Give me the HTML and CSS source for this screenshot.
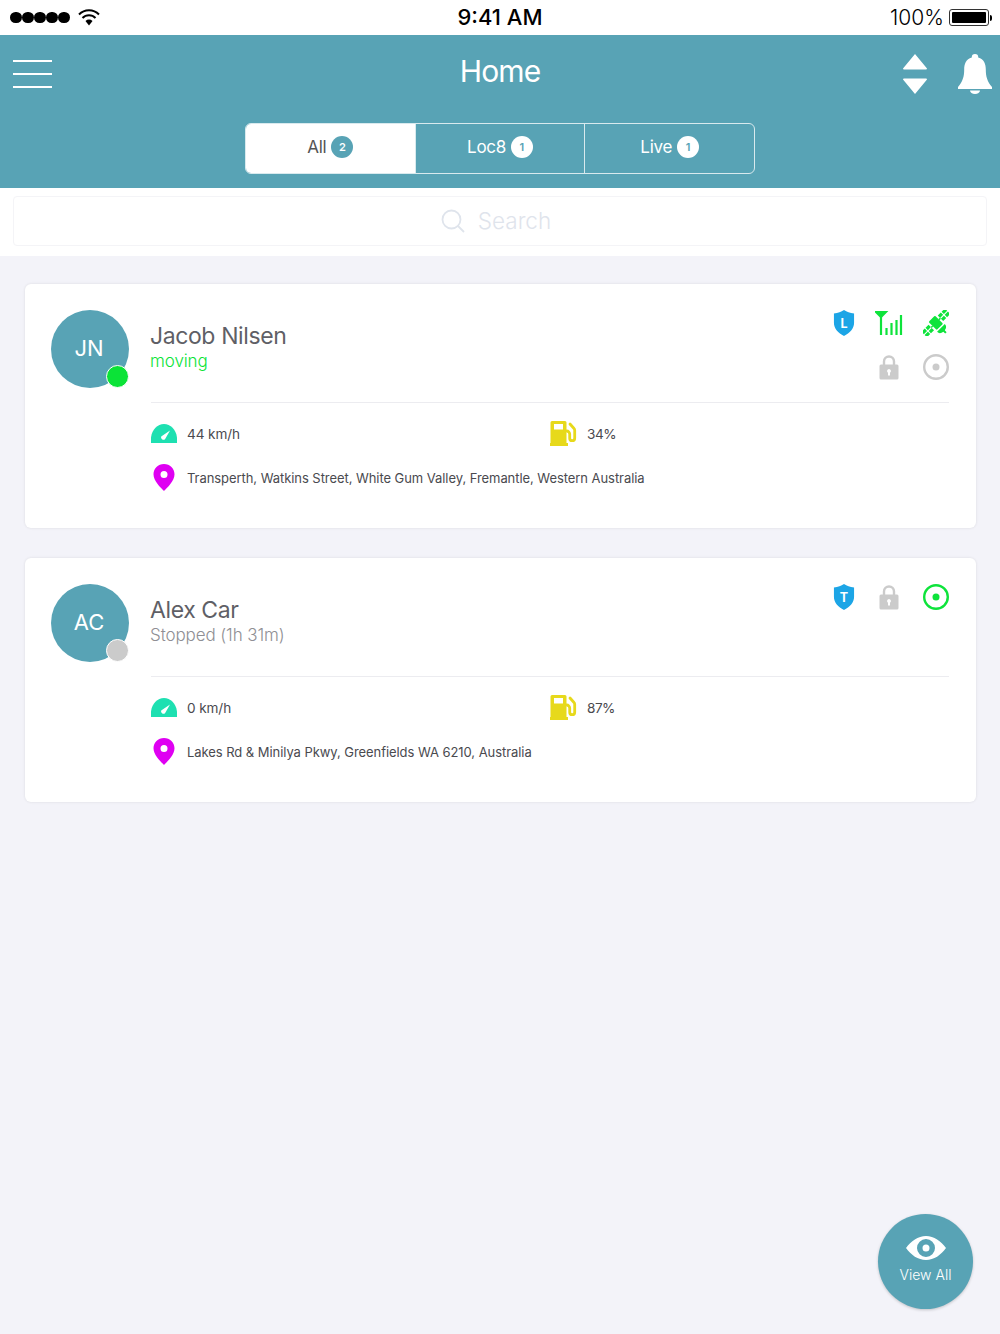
FILE: index.html
```html
<!DOCTYPE html>
<html lang="en">
<head>
    <meta charset="UTF-8">
    <meta name="viewport" content="width=device-width, initial-scale=1.0">
    <title>Home</title>
    <link rel="stylesheet" href="styles.css">
</head>
<body>
    <!-- Shared icons -->
    <svg class="icon-defs" xmlns="http://www.w3.org/2000/svg">
        <symbol id="icon-lock" viewBox="0 0 26 26">
            <path d="M8 11V7.500a5 5 0 0 1 10 0V11" fill="none" stroke="#cbcbcb" stroke-width="2.400"/>
            <path fill-rule="evenodd" fill="#cbcbcb" d="M5 10.500h16a1.500 1.500 0 0 1 1.500 1.500v12a1.500 1.500 0 0 1-1.500 1.500H5a1.500 1.500 0 0 1-1.500-1.500V12A1.500 1.500 0 0 1 5 10.500zM13 15a2 2 0 0 0-1 3.700V21.500h2v-2.800A2 2 0 0 0 13 15z"/>
        </symbol>
        <symbol id="icon-gauge" viewBox="0 0 26 19">
            <path fill="#1ee0b1" d="M0 19v-5.500C1 5.500 6.500 0 13 0s12 5.500 13 13.500V19z"/>
            <path fill="#fff" d="M19 6.500l-5 8.700a2.400 2.400 0 0 1-3.800-2.700z"/>
        </symbol>
        <symbol id="icon-fuel" viewBox="0 0 27 25">
            <path fill-rule="evenodd" fill="#e7d91b" d="M2 0h13a1.500 1.500 0 0 1 1.500 1.500V22H18v3H0v-3h.5V1.500A1.500 1.500 0 0 1 2 0zM4 3v5.500h9V3z"/>
            <path fill="none" stroke="#e7d91b" stroke-width="2.800" stroke-linecap="round" stroke-linejoin="round" d="M20 3l4 4.500a2.500 2.500 0 0 1 .7 1.700v8a2.500 2.500 0 0 1-5 0V13a3 3 0 0 0-3-3"/>
        </symbol>
        <symbol id="icon-pin" viewBox="0 0 22 27">
            <path fill-rule="evenodd" fill="#df00f2" d="M11 0C5 0 .5 4.500.5 10.300.5 17 7.500 23.500 11 27c3.500-3.500 10.500-10 10.500-16.700C21.500 4.500 17 0 11 0zm0 7a3.500 3.500 0 1 1 0 7 3.500 3.500 0 0 1 0-7z"/>
        </symbol>
        <symbol id="icon-shield" viewBox="0 0 22 27">
            <path fill="#1ca5e6" d="M11 0c3 2 6 3.200 10.500 3.700V13c0 6.500-4.500 11-10.500 14C5 24 .5 19.500.5 13V3.700C5 3.200 8 2 11 0z"/>
        </symbol>
    </svg>

    <!-- Status bar -->
    <div class="status-bar">
        <div class="status-left">
            <div class="signal-dots"><span></span><span></span><span></span><span></span><span></span></div>
            <svg class="wifi" width="22" height="17" viewBox="0 0 22 17">
                <path d="M1 5.500a14 14 0 0 1 20 0M4.500 9a9 9 0 0 1 13 0" fill="none" stroke="#000" stroke-width="2"/>
                <path d="M7.500 12a5 5 0 0 1 7 0L11 16.500z" fill="#000"/>
            </svg>
        </div>
        <div class="status-time">9:41 AM</div>
        <div class="status-right">
            <span>100%</span>
            <div class="battery"><div class="battery-fill"></div></div>
            <div class="battery-tip"></div>
        </div>
    </div>

    <!-- Header -->
    <div class="header">
        <div class="header-top">
            <div class="menu-button"><span></span><span></span><span></span></div>
            <h1>Home</h1>
            <div class="header-actions">
                <svg width="24" height="40" viewBox="0 0 24 40">
                    <path fill="#fff" d="M12 0l12 14.500a1 1 0 0 1-1 1H1a1 1 0 0 1-1-1zM12 40L0 25.500a1 1 0 0 1 1-1h22a1 1 0 0 1 1 1z"/>
                </svg>
                <svg width="34" height="40" viewBox="0 0 34 40">
                    <path fill="#fff" d="M17 0a3.200 3.200 0 0 1 3.200 3.400C26 5 27.800 10 27.800 15.500c0 7 1.500 12 6.200 17.500v2H0v-2c4.700-5.500 6.200-10.500 6.200-17.500C6.200 10 8 5 13.800 3.400A3.200 3.200 0 0 1 17 0z"/>
                    <path fill="#fff" d="M12 36.500h10a5 3.500 0 0 1-10 0z"/>
                </svg>
            </div>
        </div>
        <div class="tabs">
            <div class="tab active">All <span class="count">2</span></div>
            <div class="tab">Loc8 <span class="count">1</span></div>
            <div class="tab">Live <span class="count">1</span></div>
        </div>
    </div>

    <!-- Search -->
    <div class="search-section">
        <div class="search-box">
            <svg width="24" height="24" viewBox="0 0 24 24">
                <circle cx="10.500" cy="10.500" r="9" fill="none" stroke="#dfe4ec" stroke-width="1.800"/>
                <path d="M17 17l6 6" stroke="#dfe4ec" stroke-width="1.800"/>
            </svg>
            <span class="search-text">Search</span>
        </div>
    </div>

    <!-- Vehicles -->
    <div class="card-list">
        <div class="card">
            <div class="card-head">
                <div class="avatar">JN<span class="presence moving"></span></div>
                <div class="vehicle-name">
                    <h2>Jacob Nilsen</h2>
                    <p class="moving-text">moving</p>
                </div>
                <div class="state-icons">
                    <svg class="shield" viewBox="0 0 22 27"><use href="#icon-shield"/><text x="11" y="18.500" text-anchor="middle">L</text></svg>
                    <svg class="signal" width="28" height="26" viewBox="0 0 28 26">
                        <path d="M1 2h10L6 7z" fill="#0ee33b" stroke="#0ee33b" stroke-width="2"/>
                        <path d="M6 6v19" stroke="#0ee33b" stroke-width="2.200"/>
                        <path d="M11.500 25v-7M16.500 25V13M21.500 25V10M26 25V5" stroke="#0ee33b" stroke-width="2.200"/>
                    </svg>
                    <svg class="satellite" width="26" height="26" viewBox="0 0 26 26">
                        <g transform="rotate(-45 13 13)" fill="#0ee33b">
                            <rect x="8.500" y="7" width="9" height="11.500" rx="1"/>
                            <path d="M-3.500 9h4.600v3.300h-4.600zM2.200 9h4.300v3.300H2.200zM-3.500 13.400h4.600v3.300h-4.600zM2.200 13.400h4.300v3.300H2.200zM19.500 9h4.300v3.300h-4.300zM24.900 9h4.600v3.300h-4.600zM19.500 13.400h4.300v3.300h-4.300zM24.900 13.400h4.600v3.300h-4.600z"/>
                            <path d="M7.500 20h11a5.500 4.500 0 0 1-4.500 4.400V27h-2v-2.600A5.500 4.500 0 0 1 7.500 20z"/>
                            <path d="M6.500 12h2v1.500h-2zM17.500 12h2v1.500h-2z"/>
                        </g>
                    </svg>
                    <span></span>
                    <svg class="lock"><use href="#icon-lock"/></svg>
                    <svg class="target" width="26" height="26" viewBox="0 0 26 26">
                        <circle cx="13" cy="13" r="11.800" fill="none" stroke="#cbcbcb" stroke-width="2.400"/>
                        <circle cx="13" cy="13" r="3.500" fill="#cbcbcb"/>
                    </svg>
                </div>
            </div>
            <div class="card-body">
                <div class="stat-row">
                    <div class="stat"><svg class="gauge"><use href="#icon-gauge"/></svg>44 km/h</div>
                    <div class="stat fuel"><svg class="fuel-icon"><use href="#icon-fuel"/></svg>34%</div>
                </div>
                <div class="stat address"><svg class="pin"><use href="#icon-pin"/></svg>Transperth, Watkins Street, White Gum Valley, Fremantle, Western Australia</div>
            </div>
        </div>

        <div class="card">
            <div class="card-head">
                <div class="avatar">AC<span class="presence stopped"></span></div>
                <div class="vehicle-name">
                    <h2>Alex Car</h2>
                    <p class="stopped-text">Stopped (1h 31m)</p>
                </div>
                <div class="state-icons">
                    <svg class="shield" viewBox="0 0 22 27"><use href="#icon-shield"/><text x="11" y="18.500" text-anchor="middle">T</text></svg>
                    <svg class="lock"><use href="#icon-lock"/></svg>
                    <svg class="target" width="26" height="26" viewBox="0 0 26 26">
                        <circle cx="13" cy="13" r="11.800" fill="none" stroke="#0ee33b" stroke-width="2.400"/>
                        <circle cx="13" cy="13" r="3.500" fill="#0ee33b"/>
                    </svg>
                </div>
            </div>
            <div class="card-body">
                <div class="stat-row">
                    <div class="stat"><svg class="gauge"><use href="#icon-gauge"/></svg>0 km/h</div>
                    <div class="stat fuel"><svg class="fuel-icon"><use href="#icon-fuel"/></svg>87%</div>
                </div>
                <div class="stat address"><svg class="pin"><use href="#icon-pin"/></svg>Lakes Rd &amp; Minilya Pkwy, Greenfields WA 6210, Australia</div>
            </div>
        </div>
    </div>

    <!-- Floating button -->
    <div class="view-all">
        <svg width="40" height="24" viewBox="0 0 40 24">
            <path fill-rule="evenodd" fill="#fff" d="M20 0c8 0 15 5 20 12-5 7-12 12-20 12S5 19 0 12C5 5 12 0 20 0zm0 3a9 9 0 1 0 0 18 9 9 0 0 0 0-18zm0 5.500a3.500 3.500 0 1 1 0 7 3.500 3.500 0 0 1 0-7z"/>
        </svg>
        <span>View All</span>
    </div>
</body>
</html>
```

FILE: styles.css
```css
* {
    box-sizing: border-box;
}
body {
    position: relative;
    height: 1334px;
    margin: 0;
    overflow: hidden;
    font-family: Inter, "Noto Sans", sans-serif;
    background-color: #f3f3f9;
}
.icon-defs {
    display: none;
}

/* Status bar */
.status-bar {
    display: grid;
    grid-template-columns: 1fr auto 1fr;
    align-items: center;
    height: 35px;
    padding: 0 8px 0 10px;
    background-color: #fff;
    color: #000;
}
.status-left {
    display: flex;
    align-items: center;
    gap: 8px;
}
.signal-dots {
    display: flex;
    gap: 0.500px;
}
.signal-dots span {
    width: 11.500px;
    height: 11.500px;
    border-radius: 50%;
    background-color: #000;
}
.status-time {
    margin: 0 0 2px -2px;
    font-size: 22px;
    font-weight: 500;
}
.status-right {
    display: flex;
    align-items: center;
    justify-content: flex-end;
    font-size: 21px;
    font-weight: 300;
}
.battery {
    width: 40px;
    height: 17px;
    margin-left: 5px;
    padding: 2px;
    border: 1px solid #333;
    border-radius: 3px;
}
.battery-fill {
    height: 100%;
    border-radius: 1px;
    background-color: #000;
}
.battery-tip {
    width: 2px;
    height: 6px;
    margin-left: 1px;
    border-radius: 0 2px 2px 0;
    background-color: #000;
}

/* Header */
.header {
    height: 153px;
    padding: 13px 13px 0;
    background-color: #58a3b5;
    color: #fff;
}
.header-top {
    display: grid;
    grid-template-columns: 1fr auto 1fr;
    align-items: center;
    height: 48px;
}
.header-top h1 {
    margin: 0 0 2px;
    font-size: 30px;
    font-weight: 400;
    letter-spacing: -0.900px;
}
.menu-button {
    display: flex;
    flex-direction: column;
    gap: 10.500px;
    width: 39px;
    margin-top: 4px;
}
.menu-button span {
    height: 2.500px;
    background-color: #fff;
}
.header-actions {
    display: flex;
    justify-content: flex-end;
    align-items: center;
    gap: 31px;
    margin: 4px -5px 0 0;
}
.tabs {
    display: flex;
    width: 510px;
    height: 51px;
    margin: 27px 0 0 232px;
    border: 1px solid #d9eaee;
    border-radius: 6px;
    overflow: hidden;
}
.tab {
    display: flex;
    flex: 1;
    justify-content: center;
    align-items: center;
    gap: 5px;
    padding-bottom: 3px;
    border-left: 1px solid #d9eaee;
    font-size: 17px;
    letter-spacing: -0.300px;
}
.tab:first-child {
    border-left: none;
}
.tab.active {
    background-color: #fff;
    color: #555;
}
.count {
    display: flex;
    justify-content: center;
    align-items: center;
    width: 22px;
    height: 22px;
    border-radius: 50%;
    background-color: #fff;
    color: #58a3b5;
    font-size: 11px;
    font-weight: 600;
    letter-spacing: 0;
}
.tab.active .count {
    background-color: #58a3b5;
    color: #fff;
}

/* Search */
.search-section {
    padding: 8px 13px 10px;
    background-color: #fff;
}
.search-box {
    display: flex;
    justify-content: center;
    align-items: center;
    gap: 13px;
    height: 50px;
    padding-right: 8px;
    border: 1px solid #f4f4f7;
    border-radius: 4px;
    color: #dfe4ec;
    font-size: 22.500px;
    font-weight: 300;
}
.search-text {
    margin-bottom: 2px;
}

/* Cards */
.card-list {
    display: flex;
    flex-direction: column;
    gap: 30px;
    padding: 28px 24px 0 25px;
}
.card {
    height: 244px;
    padding: 26px 27px 0 26px;
    border-radius: 6px;
    background-color: #fff;
    box-shadow: 0 0 3px rgba(0, 0, 0, 0.1);
}
.card-head {
    display: flex;
    height: 92px;
}
.avatar {
    position: relative;
    display: flex;
    flex-shrink: 0;
    justify-content: center;
    align-items: center;
    width: 78px;
    height: 78px;
    padding: 0 2px 2px 0;
    border-radius: 50%;
    background-color: #58a3b5;
    color: #fff;
    font-size: 22px;
}
.presence {
    position: absolute;
    right: 0;
    bottom: 0;
    width: 23px;
    height: 23px;
    border: 1.500px solid #fff;
    border-radius: 50%;
}
.presence.moving {
    background-color: #0be337;
}
.presence.stopped {
    background-color: #cbcbcb;
}
.vehicle-name {
    margin: 11px 0 0 21px;
}
.vehicle-name h2 {
    margin: 0;
    color: #5f5f66;
    font-size: 23px;
    font-weight: 400;
    line-height: 30px;
    letter-spacing: -0.400px;
}
.vehicle-name p {
    margin: 0;
    font-size: 17px;
    font-weight: 300;
    line-height: 21px;
    letter-spacing: -0.100px;
}
.moving-text {
    color: #0be337;
}
.stopped-text {
    color: #8f8f94;
}
.state-icons {
    display: grid;
    grid-template-columns: 44px 48px 26px;
    grid-auto-rows: 26px;
    row-gap: 18px;
    margin-left: auto;
}
.shield {
    width: 22px;
    height: 26px;
    margin-left: 2px;
}
.shield text {
    fill: #fff;
    font-family: Inter, sans-serif;
    font-size: 13px;
    font-weight: 700;
}
.lock {
    width: 26px;
    height: 26px;
    margin-left: 1px;
}
.card-body {
    margin-left: 100px;
    padding-top: 18px;
    border-top: 1px solid #ececf0;
}
.stat-row {
    display: grid;
    grid-template-columns: 399px 1fr;
    margin-bottom: 18px;
}
.stat {
    display: flex;
    align-items: center;
    height: 26px;
    padding-bottom: 1px;
    color: #4a4a4f;
    font-size: 13.600px;
    letter-spacing: -0.100px;
}
.stat.fuel {
    letter-spacing: -0.500px;
}
.stat.address {
    font-size: 13px;
    letter-spacing: -0.060px;
}
.gauge {
    width: 26px;
    height: 19px;
    margin-right: 10px;
}
.fuel-icon {
    width: 27px;
    height: 25px;
    margin-right: 10px;
}
.pin {
    width: 22px;
    height: 27px;
    margin: 0 12px 0 2px;
}

/* Floating button */
.view-all {
    position: absolute;
    right: 27px;
    bottom: 25px;
    display: flex;
    flex-direction: column;
    align-items: center;
    width: 95px;
    height: 95px;
    padding-top: 22px;
    border-radius: 50%;
    background-color: #58a3b5;
    box-shadow: 0 1px 3px rgba(0, 0, 0, 0.2);
    color: #fff;
    font-size: 14px;
    font-weight: 300;
}
.view-all span {
    margin-top: 6px;
}
```
